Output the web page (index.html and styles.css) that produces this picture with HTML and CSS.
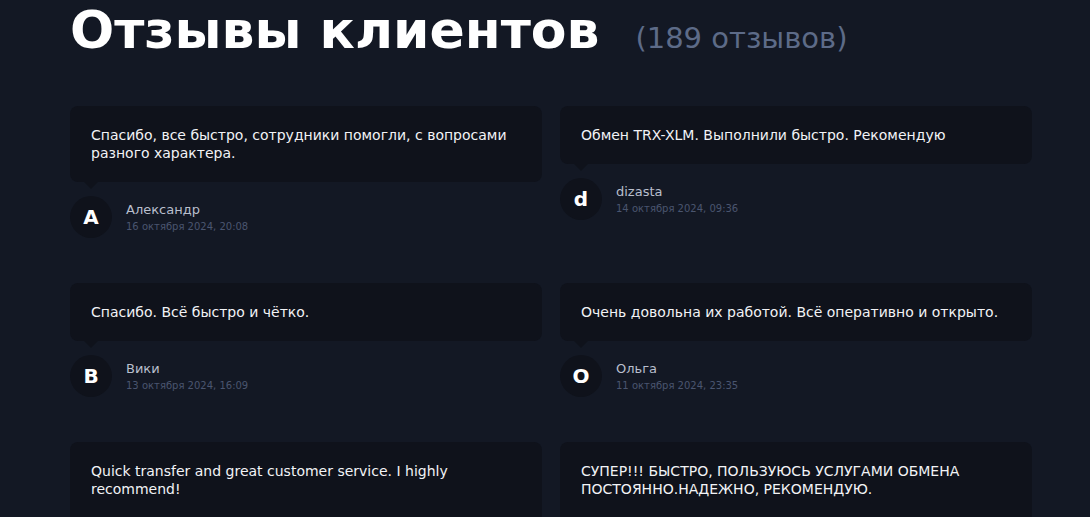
FILE: index.html
```html
<!DOCTYPE html>
<html lang="ru">
<head>
<meta charset="utf-8">
<link rel="stylesheet" href="styles.css">
</head>
<body>
<div class="page">
  <div class="heading">
    <h1 class="title">Отзывы клиентов</h1>
    <span class="count">(189 отзывов)</span>
  </div>
  <div class="grid">
    <div class="review">
      <div class="bubble">Спасибо, все быстро, сотрудники помогли, с вопросами разного характера.</div>
      <div class="author"><div class="avatar">А</div><div class="meta"><div class="name">Александр</div><div class="date">16 октября 2024, 20:08</div></div></div>
    </div>
    <div class="review">
      <div class="bubble">Обмен TRX-XLM. Выполнили быстро. Рекомендую</div>
      <div class="author"><div class="avatar">d</div><div class="meta"><div class="name">dizasta</div><div class="date">14 октября 2024, 09:36</div></div></div>
    </div>
    <div class="review">
      <div class="bubble">Спасибо. Всё быстро и чётко.</div>
      <div class="author"><div class="avatar">В</div><div class="meta"><div class="name">Вики</div><div class="date">13 октября 2024, 16:09</div></div></div>
    </div>
    <div class="review">
      <div class="bubble">Очень довольна их работой. Всё оперативно и открыто.</div>
      <div class="author"><div class="avatar">О</div><div class="meta"><div class="name">Ольга</div><div class="date">11 октября 2024, 23:35</div></div></div>
    </div>
    <div class="review">
      <div class="bubble bubble-tall">Quick transfer and great customer service. I highly recommend!</div>
    </div>
    <div class="review">
      <div class="bubble bubble-tall">СУПЕР!!! БЫСТРО, ПОЛЬЗУЮСЬ УСЛУГАМИ ОБМЕНА ПОСТОЯННО.НАДЕЖНО, РЕКОМЕНДУЮ.</div>
    </div>
  </div>
</div>
</body>
</html>
```
FILE: styles.css
```css
html, body {
  margin: 0;
  padding: 0;
  background: #131824;
  overflow: hidden;
}
body {
  font-family: "DejaVu Sans", "Noto Sans", sans-serif;
  color: #ffffff;
}
.page {
  padding: 0 0 0 70px;
  width: 962px;
}
.heading {
  display: flex;
  align-items: baseline;
  gap: 36px;
  height: 106px;
}
.title {
  margin: 0;
  font-size: 52px;
  line-height: 52px;
  font-weight: 900;
  letter-spacing: 0;
  color: #ffffff;
  padding-top: 4px;
}
.count {
  font-size: 29px;
  color: #5d6b88;
  font-weight: 400;
}
.grid {
  display: grid;
  grid-template-columns: 472px 472px;
  column-gap: 18px;
  row-gap: 45px;
  align-items: start;
}
.bubble {
  position: relative;
  background: #0f121b;
  border-radius: 8px;
  padding: 20px 21px;
  font-size: 14px;
  line-height: 18px;
  color: #f2f3f6;
}
.bubble::after {
  content: "";
  position: absolute;
  left: 14px;
  bottom: -7px;
  border-left: 7px solid transparent;
  border-right: 7px solid transparent;
  border-top: 7px solid #0f121b;
}
.bubble-tall {
  min-height: 80px;
}
.author {
  display: flex;
  align-items: center;
  gap: 14px;
  margin-top: 14px;
}
.avatar {
  width: 42px;
  height: 42px;
  border-radius: 50%;
  background: #0f121b;
  display: flex;
  align-items: center;
  justify-content: center;
  font-size: 20px;
  font-weight: 900;
  color: #ffffff;
  flex: none;
}
.meta {
  display: flex;
  flex-direction: column;
  gap: 2px;
}
.name {
  font-size: 13px;
  line-height: 16px;
  color: #b9bfcd;
}
.date {
  font-size: 10px;
  line-height: 13px;
  color: #4a556f;
}
```
